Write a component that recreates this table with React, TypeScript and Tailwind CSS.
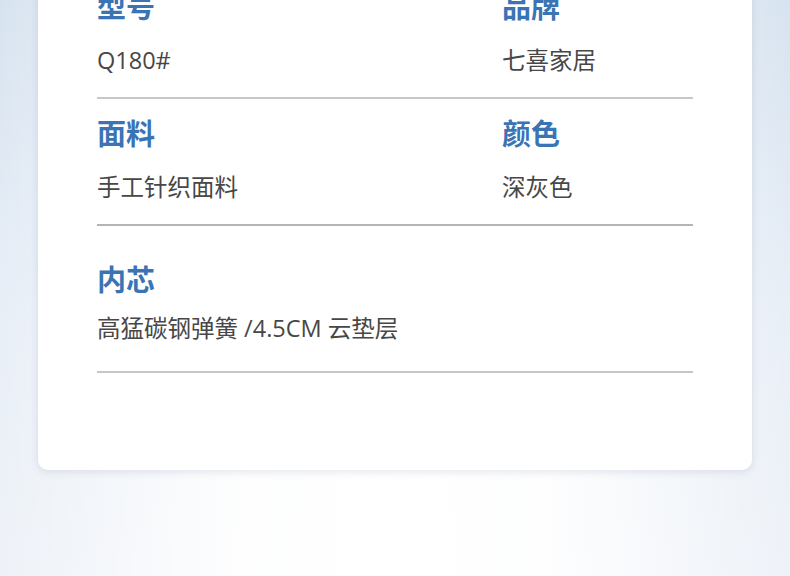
type Spec = {
  label: string;
  value: string;
};

const rows: { items: Spec[]; className: string; gap: string; line: string }[] = [
  {
    items: [
      { label: "型号", value: "Q180#" },
      { label: "品牌", value: "七喜家居" },
    ],
    className: "pt-[19px] pb-[23px]",
    gap: "mt-[23px]",
    line: "border-[#c8c8c8]",
  },
  {
    items: [
      { label: "面料", value: "手工针织面料" },
      { label: "颜色", value: "深灰色" },
    ],
    className: "pt-[19px] pb-[23px]",
    gap: "mt-[23px]",
    line: "border-[#b4b4b4]",
  },
  {
    items: [{ label: "内芯", value: "高猛碳钢弹簧 /4.5CM 云垫层" }],
    className: "pt-[38px] pb-[29px]",
    gap: "mt-[18px]",
    line: "border-[#c6c6c6]",
  },
];

function SpecCell({ label, value, gap }: Spec & { gap: string }) {
  return (
    <div>
      <h3 className="text-[29px] leading-[32px] font-bold text-[#3a74b4]">{label}</h3>
      <p className={`${gap} text-[23.5px] leading-[28px] text-[#474747]`}>{value}</p>
    </div>
  );
}

export default function App() {
  return (
    <div
      className="relative h-[576px] w-[790px] overflow-hidden bg-[linear-gradient(to_bottom,#d7e3f0,#e9eff7_55%,#eef2f8)]"
      style={{ fontFamily: '"Open Sans", "Noto Sans CJK SC", sans-serif' }}
    >
      <div className="absolute inset-0 bg-[linear-gradient(to_right,rgba(255,255,255,0)_0%,rgba(255,255,255,0.9)_30%,#ffffff_50%,rgba(255,255,255,0.9)_70%,rgba(255,255,255,0)_100%)]" />
      <div className="relative mx-[38px] mt-[-28px] rounded-b-[10px] bg-white pb-[97px] shadow-[0_2px_8px_rgba(40,60,90,0.12)]">
        <div className="ml-[59px] w-[596px]">
          {rows.map((row, i) => (
            <div
              key={i}
              className={`grid grid-cols-[405px_1fr] border-b-2 ${row.line} ${row.className}`}
            >
              {row.items.map((item) => (
                <SpecCell key={item.label} {...item} gap={row.gap} />
              ))}
            </div>
          ))}
        </div>
      </div>
    </div>
  );
}
